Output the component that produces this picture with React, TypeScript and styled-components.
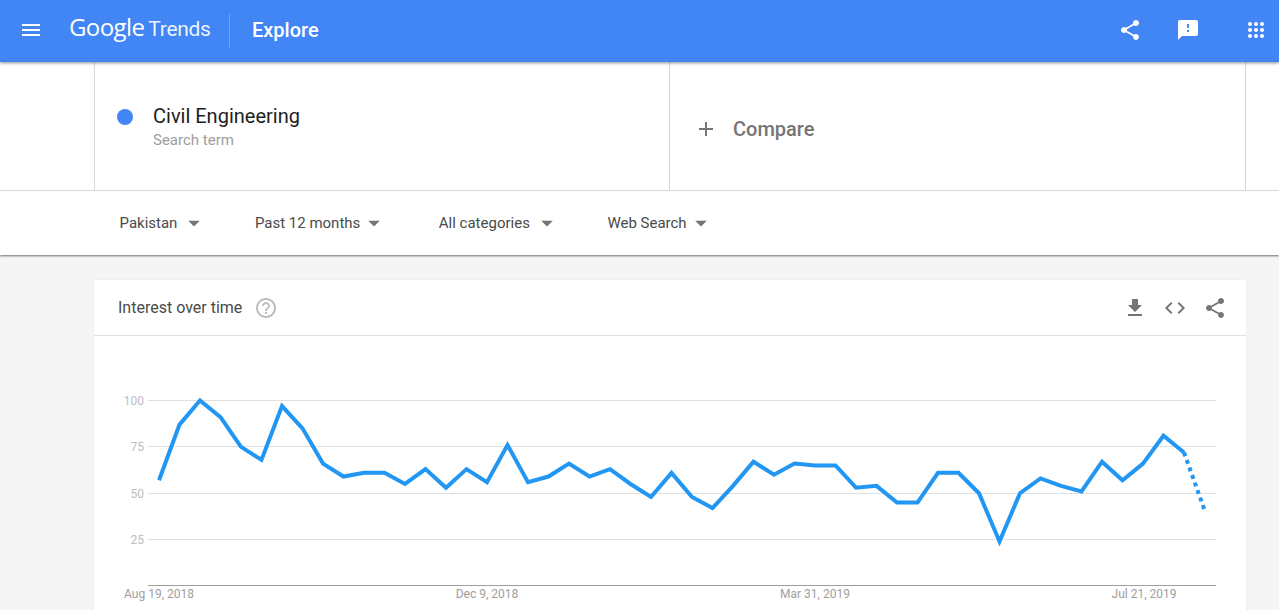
import React from "react";
import styled, { createGlobalStyle } from "styled-components";
import {
  MdAdd,
  MdArrowDropDown,
  MdCode,
  MdFeedback,
  MdFileDownload,
  MdHelpOutline,
  MdMenu,
  MdShare,
} from "react-icons/md";

const GlobalStyle = createGlobalStyle`
  html, body {
    margin: 0;
    height: 100%;
    overflow: hidden;
    background: #f5f5f5;
    font-family: Roboto, "Liberation Sans", sans-serif;
  }
`;

const Page = styled.div`
  height: 610px;
  overflow: hidden;
  display: flex;
  flex-direction: column;
`;

const Header = styled.header`
  position: relative;
  z-index: 3;
  flex: none;
  box-sizing: border-box;
  height: 62px;
  display: flex;
  align-items: center;
  padding: 0 0 2px 19px;
  background: #4285f4;
  color: #fff;
  box-shadow: 0 1px 3px rgba(0, 0, 0, 0.45);
`;

const Logo = styled.div`
  margin-left: 26px;
  width: 160px;
  display: flex;
  align-items: baseline;
  gap: 4px;
  margin-top: -7px;
`;

const LogoGoogle = styled.span`
  font-family: "Open Sans", sans-serif;
  font-size: 24px;
  letter-spacing: -0.6px;
`;

const LogoTrends = styled.span`
  font-size: 21px;
  letter-spacing: -0.3px;
  color: rgba(255, 255, 255, 0.92);
`;

const HeaderDivider = styled.div`
  width: 1px;
  height: 33px;
  background: rgba(255, 255, 255, 0.25);
`;

const PageTitle = styled.div`
  margin-left: 22px;
  font-size: 20px;
  font-weight: 500;
`;

const HeaderActions = styled.div`
  margin-left: auto;
  display: flex;
  align-items: center;
  padding-right: 11px;
  gap: 34px;
`;

const AppsIcon = styled.svg`
  margin-left: 10px;
  display: block;
`;

const SearchBand = styled.section`
  flex: none;
  height: 128px;
  background: #fff;
  border-bottom: 1px solid #e0e0e0;
  display: flex;
`;

const SearchColumns = styled.div`
  margin-left: 94px;
  flex: none;
  display: grid;
  grid-template-columns: 575px 575px;
  border-left: 1px solid #d9d9d9;
  border-right: 1px solid #d9d9d9;
`;

const TermCell = styled.div`
  display: flex;
  align-items: flex-start;
  padding: 42px 0 0 22px;
  border-right: 1px solid #d9d9d9;
`;

const Dot = styled.span`
  width: 16px;
  height: 16px;
  margin: 5px 20px 0 0;
  border-radius: 50%;
  background: #4285f4;
`;

const TermName = styled.div`
  font-size: 20px;
  line-height: 24px;
  color: #212121;
`;

const TermType = styled.div`
  margin-top: 3px;
  font-size: 15px;
  line-height: 18px;
  color: #9e9e9e;
`;

const CompareCell = styled.div`
  display: flex;
  align-items: center;
  padding: 6px 0 0 24px;
  color: #757575;
  font-size: 20px;
  font-weight: 500;
  gap: 15px;
`;

const FilterBar = styled.nav`
  position: relative;
  z-index: 2;
  flex: none;
  height: 64px;
  display: flex;
  align-items: center;
  background: #fff;
  box-shadow: 0 1px 2px rgba(0, 0, 0, 0.55);
`;

const Filter = styled.div<{ $left: number; $gap: number }>`
  display: flex;
  align-items: center;
  margin-left: ${(p) => p.$left}px;
  gap: ${(p) => p.$gap}px;
  font-size: 15px;
  color: #4a4a4a;
  svg {
    color: #757575;
  }
`;

const Main = styled.main`
  flex: 1;
  padding: 25px 33px 0 94px;
`;

const Card = styled.article`
  background: #fff;
  box-shadow: 0 0 1px rgba(0, 0, 0, 0.12);
`;

const CardHeader = styled.div`
  height: 55px;
  display: flex;
  align-items: center;
  padding: 0 19px 0 24px;
  border-bottom: 1px solid #e0e0e0;
`;

const CardTitle = styled.h2`
  margin: 0 12px 0 0;
  font-size: 16px;
  font-weight: 400;
  color: #4a4a4a;
`;

const CardActions = styled.div`
  margin-left: auto;
  display: flex;
  align-items: center;
  gap: 16px;
  color: #757575;
`;

const ChartSvg = styled.svg`
  display: block;
`;

const values = [
  57, 87, 100, 91, 75, 68, 97, 85, 66, 59, 61, 61, 55, 63, 53, 63, 56, 76, 56, 59, 66, 59, 63, 55,
  48, 61, 48, 42, 54, 67, 60, 66, 65, 65, 53, 54, 45, 45, 61, 61, 50, 24, 50, 58, 54, 51, 67, 57,
  66, 81, 72, 41,
];

// chart coordinates are relative to the card, which starts at x=94, y=336
const toX = (i: number) => 65 + i * 20.5;
const toY = (v: number) => 250 - v * 1.855;
const points = values.map((v, i) => `${toX(i)},${toY(v)}`);
const solid = points.slice(0, -1).join(" ");
const dotted = points.slice(-2).join(" ");

const gridLines = [
  { label: "100", y: 64.5 },
  { label: "75", y: 110.5 },
  { label: "50", y: 157.5 },
  { label: "25", y: 203.5 },
];

const dates = [
  { label: "Aug 19, 2018", x: 65 },
  { label: "Dec 9, 2018", x: 393 },
  { label: "Mar 31, 2019", x: 721 },
  { label: "Jul 21, 2019", x: 1050 },
];

const Chart = () => (
  <ChartSvg width="1152" height="274" viewBox="0 0 1152 274">
    {gridLines.map((g) => (
      <g key={g.label}>
        <line x1="54" x2="1122" y1={g.y} y2={g.y} stroke="#e0e0e0" />
        <text x="50" y={g.y + 4} textAnchor="end" fontSize="12" fill="#bdbdbd">
          {g.label}
        </text>
      </g>
    ))}
    <line x1="54" x2="1122" y1="249.5" y2="249.5" stroke="#9e9e9e" />
    {dates.map((d) => (
      <text key={d.label} x={d.x} y="262" textAnchor="middle" fontSize="12" fill="#9e9e9e">
        {d.label}
      </text>
    ))}
    <polyline points={solid} fill="none" stroke="#2196f3" strokeWidth="4" strokeLinejoin="miter" />
    <polyline points={dotted} fill="none" stroke="#2196f3" strokeWidth="4" strokeDasharray="4 4" />
  </ChartSvg>
);

const filters = [
  { label: "Pakistan", left: 119.5, gap: 3 },
  { label: "Past 12 months", left: 46.5, gap: -1 },
  { label: "All categories", left: 50.5, gap: 3 },
  { label: "Web Search", left: 46.5, gap: -0.5 },
];

const appDots = [6, 12, 18].flatMap((y) => [6, 12, 18].map((x) => ({ x, y })));

export default function App() {
  return (
    <Page>
      <GlobalStyle />
      <Header>
        <MdMenu size={24} />
        <Logo>
          <LogoGoogle>Google</LogoGoogle>
          <LogoTrends>Trends</LogoTrends>
        </Logo>
        <HeaderDivider />
        <PageTitle>Explore</PageTitle>
        <HeaderActions>
          <MdShare size={24} />
          <MdFeedback size={24} />
          <AppsIcon width="24" height="24" viewBox="0 0 24 24" fill="currentColor">
            {appDots.map((d) => (
              <circle key={`${d.x}-${d.y}`} cx={d.x} cy={d.y} r="2" />
            ))}
          </AppsIcon>
        </HeaderActions>
      </Header>
      <SearchBand>
        <SearchColumns>
          <TermCell>
            <Dot />
            <div>
              <TermName>Civil Engineering</TermName>
              <TermType>Search term</TermType>
            </div>
          </TermCell>
          <CompareCell>
            <MdAdd size={24} />
            Compare
          </CompareCell>
        </SearchColumns>
      </SearchBand>
      <FilterBar>
        {filters.map((f) => (
          <Filter key={f.label} $left={f.left} $gap={f.gap}>
            {f.label}
            <MdArrowDropDown size={28} />
          </Filter>
        ))}
      </FilterBar>
      <Main>
        <Card>
          <CardHeader>
            <CardTitle>Interest over time</CardTitle>
            <MdHelpOutline size={24} color="#bdbdbd" />
            <CardActions>
              <MdFileDownload size={24} />
              <MdCode size={24} />
              <MdShare size={24} />
            </CardActions>
          </CardHeader>
          <Chart />
        </Card>
      </Main>
    </Page>
  );
}
